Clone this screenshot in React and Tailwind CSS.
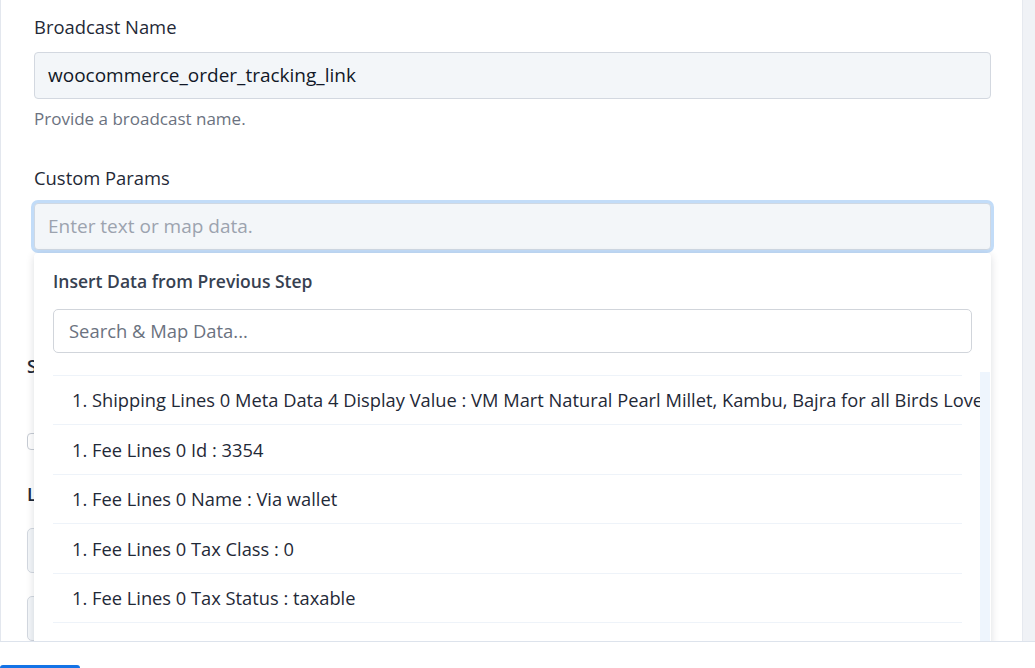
import React from 'react';

const rows = [
  '1. Shipping Lines 0 Meta Data 4 Display Value : VM Mart Natural Pearl Millet, Kambu, Bajra for all Birds Lovers',
  '1. Fee Lines 0 Id : 3354',
  '1. Fee Lines 0 Name : Via wallet',
  '1. Fee Lines 0 Tax Class : 0',
  '1. Fee Lines 0 Tax Status : taxable',
  '1. Fee Lines 0 Amount : 0',
];

export default function App() {
  return (
    <div className="h-[668px] w-[1035px] flex flex-col bg-white overflow-hidden text-[#1f2937] font-['Open_Sans','Liberation_Sans',sans-serif]">
      <div className="flex-1 min-h-0 flex">
        {/* main form panel */}
        <div className="relative w-[1022px] border-l border-[#e3e7ee] overflow-hidden">
          <div className="pl-[33px] pr-[31px] pt-[16px]">
            <label className="block text-[18.4px] leading-[22px]">Broadcast Name</label>
            <div className="mt-[14px] h-[47px] flex items-center px-[13px] bg-[#f3f6f9] border border-[#d3d8e0] rounded-[4px] text-[19px] text-[#111827]">
              woocommerce_order_tracking_link
            </div>
            <p className="mt-[9px] text-[17px] leading-[22px] text-[#6b7280]">Provide a broadcast name.</p>

            <label className="block mt-[37px] text-[18.4px] leading-[22px]">Custom Params</label>
            <div className="relative mt-[14px]">
              <div className="h-[47px] flex items-center px-[13px] bg-[#f3f6f9] border border-[#cfd8e3] rounded-[4px] ring-[3px] ring-[#c2dcf8] text-[19px] text-[#9ca3af]">
                Enter text or map data.
              </div>

              {/* dropdown */}
              <div className="absolute left-0 top-[50px] w-[957px] h-[400px] z-10 bg-white rounded-t-[4px] shadow-[0_2px_8px_rgba(15,23,42,0.14)]">
                <div className="px-[19px] pt-[17px] text-[17.5px] leading-[22px] font-semibold text-[#374151]">
                  Insert Data from Previous Step
                </div>
                <div className="mx-[19px] mt-[17px] h-[44px] flex items-center px-[15px] border border-[#d1d5db] rounded-[5px] text-[18.4px] text-[#6b7280]">
                  Search &amp; Map Data...
                </div>
                <div className="flex mt-[19px] pl-[19px]">
                  <div className="w-[927px] overflow-hidden pt-[3px]">
                    {rows.map((r) => (
                      <div key={r} className="w-[909px] h-[49.4px] flex items-center border-t border-[#eef3f9] pl-[19px] whitespace-nowrap text-[18.3px] text-[#1f2937]">
                        {r}
                      </div>
                    ))}
                  </div>
                  <div className="w-[10px] bg-[#eef5fd]"></div>
                </div>
              </div>
            </div>

            {/* form fields hidden beneath the dropdown */}
            <div className="-ml-[7px]">
              <div className="mt-[105px] text-[18px] leading-[22px] font-semibold">Send to</div>
              <div className="mt-[56px] w-[17px] h-[17px] border border-[#c7ccd4] rounded-[4px] bg-white"></div>
              <div className="mt-[33px] text-[18px] leading-[22px] font-semibold">Language</div>
              <div className="mt-[23px] h-[45px] bg-[#f3f6f9] border border-[#d3d8e0] rounded-[5px]"></div>
              <div className="mt-[23px] h-[45px] bg-[#f3f6f9] border border-[#d3d8e0] rounded-[5px]"></div>
            </div>
          </div>
        </div>
        <div className="flex-1 bg-[#f0f2f6] border-l border-[#e6e9ef]"></div>
      </div>

      {/* footer */}
      <div className="h-[27px] shrink-0 border-t border-[#dde3ec] bg-white flex items-end">
        <button className="w-[80px] h-[3px] bg-[#1473e6] rounded-t-[4px]"></button>
      </div>
    </div>
  );
}
